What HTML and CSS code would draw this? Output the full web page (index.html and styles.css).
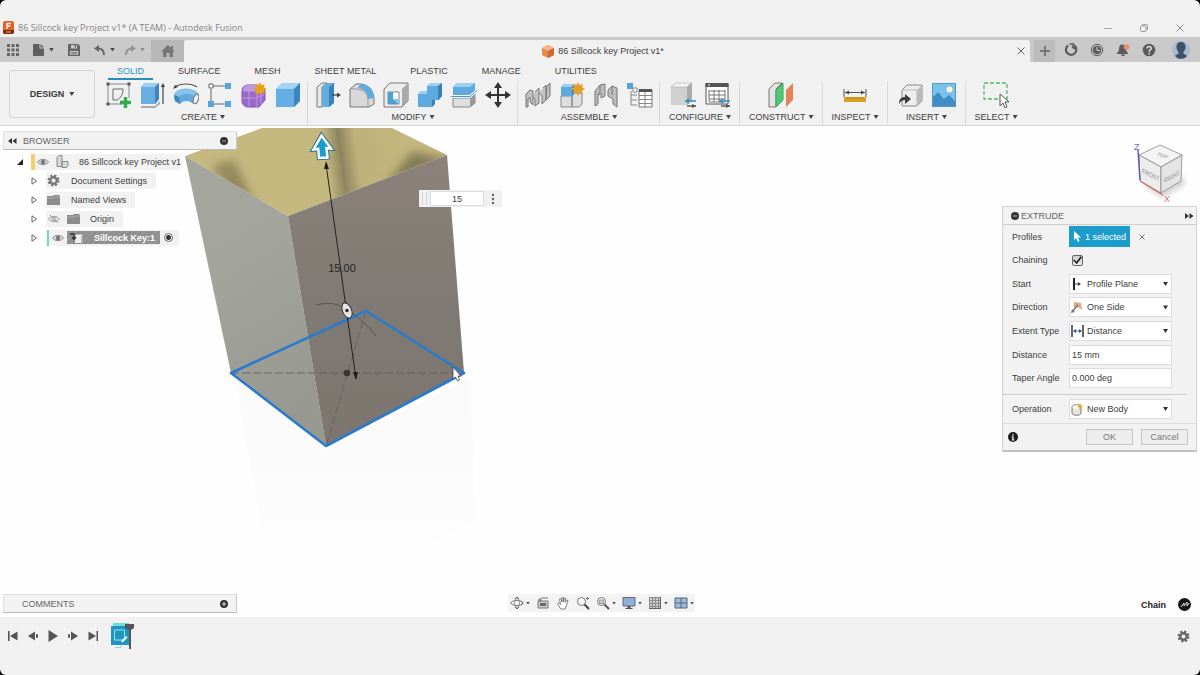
FILE: index.html
```html
<!DOCTYPE html>
<html lang="en">
<head>
<meta charset="utf-8">
<title>86 Sillcock key Project v1* (A TEAM) - Autodesk Fusion</title>
<link rel="stylesheet" href="styles.css">
</head>
<body>
<header class="titlebar">
  <svg class="app-logo" width="12" height="14" viewBox="0 0 12 14"><rect x="0" y="0" width="11" height="13" rx="2" fill="#e8611f"/><path d="M0 9h11v2a2 2 0 0 1-2 2H2a2 2 0 0 1-2-2z" fill="#7e2c10"/><path d="M4 8V2.500h4M4 5h3.200" stroke="#fff" stroke-width="1.400" fill="none"/><path d="M3 11h5" stroke="#e9a98c" stroke-width="1"/></svg>
  <h1 class="app-title">86 Sillcock key Project v1* (A TEAM) - Autodesk Fusion</h1>
  <div class="window-controls">
    <button aria-label="Minimize"><svg width="10" height="10" viewBox="0 0 10 10"><path d="M1 5.500h8" stroke="#aaa"/></svg></button>
    <button aria-label="Restore"><svg width="10" height="10" viewBox="0 0 10 10" fill="none" stroke="#999"><rect x="1.500" y="3" width="5.500" height="5.500" rx="1"/><path d="M3 3V2.500a1 1 0 0 1 1-1h3.500a1 1 0 0 1 1 1V6a1 1 0 0 1-1 1"/></svg></button>
    <button aria-label="Close"><svg width="10" height="10" viewBox="0 0 10 10" stroke="#8c8c8c"><path d="M1.500 1.500l7 7M8.500 1.500l-7 7"/></svg></button>
  </div>
</header>

<nav class="tabbar">
  <div class="quick">
    <button aria-label="Data panel"><svg width="12" height="12" viewBox="0 0 12 12" fill="#666"><path d="M0 0h3v3H0zM4.500 0h3v3h-3zM9 0h3v3H9zM0 4.500h3v3H0zM4.500 4.500h3v3h-3zM9 4.500h3v3H9zM0 9h3v3H0zM4.500 9h3v3h-3zM9 9h3v3H9z"/></svg></button>
    <button class="with-arrow" aria-label="File"><svg width="12" height="12" viewBox="0 0 12 12" fill="#5f5f5f"><path d="M0 0h6.500v4.500H11V12H0z"/><path d="M7.500 0L11 3.500H7.500z"/></svg><i class="caret"></i></button>
    <button aria-label="Save"><svg width="12" height="12" viewBox="0 0 12 12"><path d="M0 0h10l2 2v10H0z" fill="#666"/><path d="M3 1h6v3.500H3zM2 7h8v4H2z" fill="#c9c9c9"/><path d="M6.500 1h1.500v2.500H6.500zM3 8h6v.8H3zM3 9.600h6v.8H3z" fill="#666"/></svg></button>
    <div class="history">
      <button class="with-arrow" aria-label="Undo"><svg width="12" height="12" viewBox="0 0 12 12"><path d="M0 4.500L5 1v7z" fill="#666"/><path d="M4 4.500c4 0 6 1.500 6 6.500" stroke="#666" stroke-width="1.800" fill="none"/></svg><i class="caret"></i></button>
      <button class="with-arrow" aria-label="Redo"><svg width="12" height="12" viewBox="0 0 12 12"><path d="M12 4.500L7 1v7z" fill="#939393"/><path d="M8 4.500c-4 0-6 1.500-6 6.500" stroke="#939393" stroke-width="1.800" fill="none"/></svg><i class="caret caret-dim"></i></button>
    </div>
  </div>
  <button class="home" aria-label="Home"><svg width="14" height="12" viewBox="0 0 14 12" fill="#777"><path d="M7 0l7 6.500h-2V12H8.500V8h-3v4H2V6.500H0z"/><path d="M10 1h2v3h-2z"/></svg></button>
  <div class="doc-tab">
    <svg width="12" height="13" viewBox="0 0 12 13"><path d="M6 0l6 3v7l-6 3-6-3V3z" fill="#e58a4b"/><path d="M6 0l6 3-6 3-6-3z" fill="#f4b587"/><path d="M6 6l6-3v7l-6 3z" fill="#d06a2b"/></svg>
    <span>86 Sillcock key Project v1*</span>
    <button class="doc-close" aria-label="Close tab"><svg width="8" height="8" viewBox="0 0 8 8" stroke="#666"><path d="M.5.5l7 7M7.500.5l-7 7"/></svg></button>
  </div>
  <button class="new-tab" aria-label="New tab"><svg width="10" height="10" viewBox="0 0 10 10" stroke="#777" stroke-width="2"><path d="M5 0v10M0 5h10"/></svg></button>
  <div class="account">
    <button aria-label="Extensions"><svg width="14" height="14" viewBox="0 0 14 14" fill="none"><path d="M4 2.500a5.200 5.200 0 1 0 6.500.2" stroke="#5c5c5c" stroke-width="2.200"/><path d="M5.500 1.500c2-1 3.500-.8 4.500 0L8.500 4 10 5.500 12.500 4" stroke="#5c5c5c" stroke-width="1.600"/></svg></button>
    <button aria-label="Job status"><svg width="14" height="14" viewBox="0 0 14 14" fill="none"><circle cx="7" cy="7" r="5.700" stroke="#5c5c5c"/><circle cx="7" cy="7" r="4.300" fill="#5c5c5c"/><path d="M7 4v3.500h3" stroke="#d5d5d5"/></svg></button>
    <button aria-label="Notifications"><svg width="14" height="14" viewBox="0 0 14 14"><path d="M6 1.500c3 0 4 2 4 4.500 0 3 2 3 2 5H1c0-2 2-2 2-5 0-2.500 1-4.500 3-4.500zM5 11.500h4c0 2-4 2-4 0z" fill="#5c5c5c"/><circle cx="10.500" cy="4" r="2.800" fill="#ea8b64"/></svg></button>
    <button aria-label="Help"><svg width="14" height="14" viewBox="0 0 14 14"><circle cx="7" cy="7" r="6.300" fill="#5c5c5c"/><path d="M5 5.600c0-3 4.200-2.600 4.200-.2 0 1.500-2 1.600-2 3.400M7.200 9.800v1.600" fill="none" stroke="#e0e0e0" stroke-width="1.500"/></svg></button>
    <button class="avatar" aria-label="Account"><svg width="18" height="18" viewBox="0 0 18 18"><circle cx="9" cy="9" r="9" fill="#a9bad0"/><path d="M9 1c3.200 0 4.500 2.300 4.500 5S12.200 10 11.200 11.500c.3 2 2.800 2 3.800 3.500-3 3.800-9 3.800-12 0 1-1.500 3.500-1.500 3.800-3.500C5.800 10 4.500 8.700 4.500 6S5.800 1 9 1z" fill="#3f506b"/></svg></button>
  </div>
</nav>

<section class="ribbon">
  <button class="workspace">DESIGN <i class="caret"></i></button>
  <div class="ribbon-main">
    <div class="ribbon-tabs">
      <button class="active">SOLID</button><button>SURFACE</button><button>MESH</button><button>SHEET METAL</button><button>PLASTIC</button><button>MANAGE</button><button>UTILITIES</button>
    </div>
    <div class="groups">
      <div class="group">
        <div class="icons">
          <button aria-label="Create sketch"><svg width="26" height="26" viewBox="0 0 26 26" fill="none"><path d="M3 2h21M3 2v20M3 22h14M24 2v14" stroke="#888"/><path d="M8 18V7h3M8 18h4c4-2 6-6 6-11h-7" stroke="#666"/><path d="M1.500.5h3v3h-3zM22.500.5h3v3h-3zM1.500 20.500h3v3h-3z" fill="#555"/><path d="M20.500 15v11M15 20.500h11" stroke="#2fae4e" stroke-width="3.400"/></svg></button>
          <button aria-label="Extrude"><svg width="26" height="26" viewBox="0 0 26 26"><path d="M2 24h14l5-5v3l-5 4H2z" fill="#aaa"/><path d="M2 5l4-4h14v16l-4 5H2z" fill="#68aee0"/><path d="M2 5l4-4h14l-4 4z" fill="#9bd0f0"/><path d="M16 5l4-4v16l-4 5z" fill="#3d87bd"/><path d="M24 22V3" stroke="#444" stroke-width="1.200"/><path d="M21.800 5L24 1l2 4z" fill="#444"/></svg></button>
          <button aria-label="Revolve"><svg width="26" height="26" viewBox="0 0 26 26"><path d="M1 13C4 5 20 5 26 12l-6 10c-3-4-10-4-13 0l-5-3z" fill="#62aadd"/><path d="M1 13C4 5 20 5 26 12l-5 2c-4-3-11-3-15 1z" fill="#86c3ea"/><path d="M1 13l5 2 1 7-5-3z" fill="#3d87bd"/><ellipse cx="23" cy="17" rx="2.500" ry="4.800" transform="rotate(18 23 17)" fill="#ededed" stroke="#777"/><path d="M2 5c6-4 16-4 22 0" fill="none" stroke="#555" stroke-width="1.200"/><path d="M0 7l2-4 3 2z" fill="#444"/></svg></button>
          <button aria-label="Pattern"><svg width="26" height="26" viewBox="0 0 26 26"><path d="M5 4h13M4 7v12M5 22h13" stroke="#666"/><path d="M2 2h4v4H2z" fill="#fff" stroke="#666"/><path d="M18 1h6v6h-6zM1 19h6v6H1zM18 19h6v6h-6z" fill="#5aa5d8"/></svg></button>
          <button aria-label="Create form"><svg width="26" height="26" viewBox="0 0 26 26"><path d="M7 3h10l7 6v9l-6 7H7c-4 0-6-3-6-7v-8c0-4 2-7 6-7z" fill="#9a6acb" stroke="#8050b5"/><path d="M7 3h10l-3 6H2c0-3 2-6 5-6z" fill="#bd98e0"/><path d="M1 16h14l8-3M8 9v16M16 9v16M2 9h14l6-1M20 6v17" stroke="#c5a2e6" stroke-width=".8" fill="none"/><path d="M19 0l1.500 3.200L24 2l-1.200 3.300L26 7l-3.200 1.500L24 12l-3.500-1.200L19 14l-1.500-3.200L14 12l1.200-3.500L12 7l3.200-1.700L14 2l3.400 1.200z" fill="#e8a21e"/></svg></button>
          <button aria-label="Box"><svg width="26" height="26" viewBox="0 0 26 26"><path d="M1 7l6-6h18v18l-6 6H1z" fill="#63aee2"/><path d="M1 7l6-6h18l-6 6z" fill="#a2d4f3"/><path d="M19 7l6-6v18l-6 6z" fill="#3c86bd"/></svg></button>
        </div>
        <button class="group-label">CREATE <i class="caret"></i></button>
      </div>
      <div class="group">
        <div class="icons">
          <button aria-label="Press pull"><svg width="26" height="26" viewBox="0 0 26 26"><path d="M2 5l5-4h5L7 5v20H2z" fill="#e8e8e8" stroke="#777"/><path d="M7 5l5-4h8l-5 4v20H7z" fill="#62aee0"/><path d="M14 5l5-4v20l-5 4z" fill="#3782b8"/><path d="M17 13h6" stroke="#444" stroke-width="1.300"/><path d="M22 10.500l4 2.500-4 2.500z" fill="#444"/></svg></button>
          <button aria-label="Fillet"><svg width="26" height="26" viewBox="0 0 26 26"><path d="M1 7l6-5c10-1 17 4 18 14v6l-5 3H1z" fill="#d8d8d8" stroke="#777"/><path d="M11 2c8 0 14 5 14 14l-6 1c0-6-4-10-10-11z" fill="#5eaade"/><path d="M1 7c12-1 18 3 18 11v7" fill="none" stroke="#999"/></svg></button>
          <button aria-label="Shell"><svg width="26" height="26" viewBox="0 0 26 26"><path d="M1 7l6-6h18v18l-6 6H1z" fill="#ededed" stroke="#777"/><path d="M19 7l6-6v18l-6 6z" fill="#a9a9a9"/><path d="M5 10h11v12H5z" fill="#fff" stroke="#888"/><path d="M5 10h5v7l6 5H5z" fill="#4e9fd6"/><path d="M10 17h6v5z" fill="#86c4ec"/></svg></button>
          <button aria-label="Combine"><svg width="26" height="26" viewBox="0 0 26 26"><path d="M1 12l3-3h6V4l4-3h11v13l-3 4h-4v4l-3 3H1z" fill="#5eaade"/><path d="M10 4l4-3h11l-4 3zM1 12l3-3h6v3z" fill="#9bd0f0"/><path d="M21 4l4-3v13l-4 4zM15 18h3v4l-3 3z" fill="#3681b8"/></svg></button>
          <button aria-label="Split body"><svg width="26" height="26" viewBox="0 0 26 26"><path d="M2 5l4-4h18v8l-5 4H2z" fill="#5eaade"/><path d="M2 5l4-4h18l-5 4z" fill="#9bd0f0"/><path d="M2 16h17l5-4v9l-5 4H2z" fill="#dedede" stroke="#888"/><path d="M19 16l5-4v9l-5 4z" fill="#999"/><path d="M0 14.500h19l7-6" stroke="#fff" stroke-width="2.500" fill="none"/><path d="M0 14.500h19l7-6" stroke="#4397ce" fill="none"/></svg></button>
          <button aria-label="Move"><svg width="26" height="26" viewBox="0 0 26 26"><path d="M13 4v18M4 13h18" stroke="#333" stroke-width="2"/><path d="M13 0l4 6H9zM13 26l4-6H9zM0 13l6-4v8zM26 13l-6-4v8z" fill="#333"/></svg></button>
        </div>
        <button class="group-label">MODIFY <i class="caret"></i></button>
      </div>
      <div class="group">
        <div class="icons">
          <button aria-label="Joint"><svg width="26" height="26" viewBox="0 0 26 26" fill="#c2c2c2" stroke="#777"><path d="M1 12l4-4 3 1v14l-3-3v-5l-2 2v8H1zM10 10l4-4v15l-4 3v-7l-2-2M18 6l3-3v15l-4 4v-8l-3-3M22 4l3-3v13l-4 4z"/></svg></button>
          <button aria-label="New component"><svg width="26" height="26" viewBox="0 0 26 26"><path d="M2 14h11v11H2zM13 14l3-3h7v11l-3 3h-7z" fill="#dedede" stroke="#888"/><path d="M2 5l3-3h11v9l-3 3H2z" fill="#5eaade"/><path d="M2 5l3-3h11l-3 3z" fill="#9bd0f0"/><path d="M13 5l3-3v9l-3 3z" fill="#3782b8"/><path d="M19 0l1.500 3L24 2l-1 3 3 2-3 1.500 1 3.500-3.500-1-1.500 3-1.500-3L14 12l1-3.500L12 7l3-2-1-3 3.500 1z" fill="#e4a12a"/></svg></button>
          <button aria-label="As-built joint"><svg width="26" height="26" viewBox="0 0 26 26" fill="#bdbdbd" stroke="#777"><path d="M2 9l5-6 5-1v12l-4 2v-5l-3 3v8l-3 2zM15 8l4-4 5 2v19l-4-3v-5l-5-3z"/><path d="M7 3v7l-3 3M19 4v9" fill="none"/></svg></button>
          <button aria-label="Bill of materials"><svg width="26" height="26" viewBox="0 0 26 26"><path d="M0 1h6v6H0z" fill="#56a4da"/><path d="M6 6h4v4H6z" fill="#fff" stroke="#888"/><path d="M4 9v14h6M4 13h6M4 18h6" fill="none" stroke="#888"/><path d="M12 8h13v17H12z" fill="#fff" stroke="#777"/><path d="M12 7h13v3H12z" fill="#555"/><path d="M12 13.500h13M12 17.500h13M12 21.500h13M18 10v15" stroke="#888"/></svg></button>
        </div>
        <button class="group-label">ASSEMBLE <i class="caret"></i></button>
      </div>
      <div class="group group-wide">
        <div class="icons">
          <button aria-label="Configure"><svg width="26" height="26" viewBox="0 0 26 26"><path d="M1 5l5-4h16v17l-5 5H1z" fill="#d0d0d0"/><path d="M1 5l5-4h16l-5 4z" fill="#f3f3f3" stroke="#aaa" stroke-width=".6"/><path d="M17 5l5-4v17l-5 5z" fill="#aaa"/><path d="M15 19h11" stroke="#3e91bd" stroke-width="1.600"/><path d="M17 24h9" stroke="#555" stroke-width="1.400"/><path d="M15 19l4-3v6z" fill="#3e91bd"/><path d="M26 24l-4-2v4z" fill="#555"/></svg></button>
          <button aria-label="Configuration table"><svg width="26" height="26" viewBox="0 0 26 26"><path d="M2 2h22v20H2z" fill="#fff" stroke="#555"/><path d="M1.500 1h23v4h-23z" fill="#555"/><path d="M5 9h16M5 13h16M5 17h16M5 20h16M5 8v12M10 8v12M15 8v12M21 8v12" stroke="#777"/><path d="M4 3h2" stroke="#fff"/><path d="M15 19h11" stroke="#3e91bd" stroke-width="1.600"/><path d="M17 24h9" stroke="#555" stroke-width="1.400"/><path d="M15 19l4-3v6z" fill="#3e91bd"/><path d="M26 24l-4-2v4z" fill="#555"/></svg></button>
        </div>
        <button class="group-label">CONFIGURE <i class="caret"></i></button>
      </div>
      <div class="group group-wide">
        <div class="icons">
          <button aria-label="Offset plane"><svg width="26" height="26" viewBox="0 0 26 26"><path d="M1 7l6-6h7L8 7v18H1z" fill="#e3e3e3" stroke="#777"/><path d="M8 8l7-7v17l-7 7z" fill="#50c873" stroke="#38a95b"/><path d="M18 8l7-7v17l-7 7z" fill="#e18555"/></svg></button>
        </div>
        <button class="group-label">CONSTRUCT <i class="caret"></i></button>
      </div>
      <div class="group group-wide">
        <div class="icons">
          <button aria-label="Measure"><svg width="26" height="26" viewBox="0 0 26 26"><path d="M2 7v8M24 7v8M3 10.500h20" stroke="#555"/><path d="M3 10.500l4-2v4zM23 10.500l-4-2v4z" fill="#444"/><path d="M2 15h22v5H2z" fill="#dda126"/><path d="M5 15v2.500M8 15v2M11 15v2.500M14 15v2M17 15v2.500M20 15v2" stroke="#b07c18"/></svg></button>
        </div>
        <button class="group-label">INSPECT <i class="caret"></i></button>
      </div>
      <div class="group group-wide">
        <div class="icons">
          <button aria-label="Insert derive"><svg width="26" height="26" viewBox="0 0 26 26"><path d="M5 8l5-5h15v16l-5 5H5z" fill="#ededed" stroke="#888"/><path d="M20 8l5-5v16l-5 5z" fill="#bbb"/><path d="M5 8h15v16" fill="none" stroke="#bbb"/><path d="M2 22c0-5 2-7 6-7v-3l6 5-6 5v-4c-3 0-4 1-6 4z" fill="#3c3c3c"/></svg></button>
          <button aria-label="Insert image"><svg width="26" height="26" viewBox="0 0 26 26"><path d="M1 1h24v24H1z" fill="#79c2ec"/><path d="M1 16l6-6 6 7 5-4 7 7v5H1z" fill="#3f8dc4"/><circle cx="18.500" cy="7.500" r="3" fill="#fff6d6"/><path d="M1.500 1.500h23v23h-23z" fill="none" stroke="#5098c9"/></svg></button>
        </div>
        <button class="group-label">INSERT <i class="caret"></i></button>
      </div>
      <div class="group group-wide group-last">
        <div class="icons">
          <button aria-label="Select"><svg width="28" height="26" viewBox="0 0 28 26"><path d="M2 1h23v16H2z" fill="none" stroke="#56b866" stroke-width="1.300" stroke-dasharray="4 2"/><path d="M18 12v12l3-3 2 5 2-1-2-5h4z" fill="#fff" stroke="#555"/></svg></button>
        </div>
        <button class="group-label">SELECT <i class="caret"></i></button>
      </div>
    </div>
  </div>
</section>

<main class="canvas">
  <svg class="scene" width="600" height="491" viewBox="0 126 600 491">
    <defs>
      <linearGradient id="leftFace" x1="0" y1="0" x2="0.300" y2="1"><stop offset="0" stop-color="#a5a59d"/><stop offset=".45" stop-color="#a3a59d"/><stop offset="1" stop-color="#97988f"/></linearGradient>
      <linearGradient id="rightFace" x1="0" y1="0" x2="0" y2="1"><stop offset="0" stop-color="#8b827a"/><stop offset=".5" stop-color="#7f7a73"/><stop offset="1" stop-color="#7c766f"/></linearGradient>
      <linearGradient id="inside" gradientUnits="userSpaceOnUse" x1="185" y1="185" x2="447" y2="150"><stop offset="0" stop-color="#c6b97f"/><stop offset=".54" stop-color="#c5b87f"/><stop offset=".6" stop-color="#8e845f"/><stop offset=".66" stop-color="#beb179"/><stop offset="1" stop-color="#c8bb82"/></linearGradient>
      <linearGradient id="reflection" x1="0" y1="0" x2="0" y2="1"><stop offset="0" stop-color="#fafafa"/><stop offset="1" stop-color="#fefefe"/></linearGradient>
      <filter id="soft" x="-50%" y="-50%" width="200%" height="200%"><feGaussianBlur stdDeviation="5"/></filter>
      <clipPath id="mouth"><path d="M185 156L262 128H392L447 155L288 216z"/></clipPath>
    </defs>
    <path d="M236 380L326 450L470 378L476 520L330 590L262 530z" fill="url(#reflection)"/>
    <path d="M185 156L262 128H392L447 155L288 216z" fill="url(#inside)"/>
    <g clip-path="url(#mouth)"><path d="M212 166L234 160L256 206L235 200z" fill="#827852" filter="url(#soft)" opacity=".75"/><path d="M385 186L412 152L450 158z" fill="#6e6649" filter="url(#soft)" opacity=".75"/></g>
    <path d="M185 156L288 216L326 446L231 373z" fill="url(#leftFace)"/>
    <path d="M288 216L447 155L464 373L326 446z" fill="url(#rightFace)"/>
    <path d="M231 373H464M366 311L326 446" stroke="#5f5b56" stroke-dasharray="8 3" fill="none" opacity=".8"/>
    <path d="M231 373L366 311L464 373L326 446z" fill="none" stroke="#2a7bd0" stroke-width="2.600" stroke-linejoin="round"/>
    <circle cx="347" cy="373" r="3.300" fill="#393735"/>
    <path d="M316 305C330 301 341 305 347 310C359 317 370 328 376 336" fill="none" stroke="#55514d" stroke-width=".9"/>
    <path d="M326 164L356 379" stroke="#222"/>
    <path d="M326 161l3 8h-5zM356 380l-3-8h5z" fill="#1b1b1b"/>
    <ellipse cx="347" cy="310.500" rx="4.500" ry="8" transform="rotate(-22 347 310.500)" fill="#e4e4e2" stroke="#333"/>
    <circle cx="347" cy="310.500" r="1.700" fill="#222"/>
    <text class="dimension" x="342" y="272" text-anchor="middle">15.00</text>
    <path d="M321.500 135.500L331 148.500L326.500 148.200L327.500 157.500L319 158L318.200 149L313.500 149.500z" fill="#1c9bce" stroke="#287491" stroke-width="4.500"/>
    <path d="M321.500 135.500L331 148.500L326.500 148.200L327.500 157.500L319 158L318.200 149L313.500 149.500z" fill="#1c9bce" stroke="#fff" stroke-width="2.500"/>
    <path d="M453 367v12l2.500-2 2 4 2-1-1.500-4h3z" fill="#fff" stroke="#444" stroke-width=".8"/>
  </svg>

  <section class="browser">
    <div class="panel-bar">
      <svg width="9" height="6" viewBox="0 0 9 6" fill="#333"><path d="M4 0v6L0 3zM8.500 0v6l-4-3z"/></svg>
      <h2>BROWSER</h2>
      <button aria-label="Collapse browser"><svg width="8" height="8" viewBox="0 0 8 8"><circle cx="4" cy="4" r="4" fill="#333"/><path d="M2 4h4" stroke="#aaa"/></svg></button>
    </div>
    <ul class="tree">
      <li class="root">
        <button class="twist" aria-label="Collapse"><svg width="8" height="8" viewBox="0 0 8 8"><path d="M7 1v6H1z" fill="#222"/></svg></button>
        <div class="node"><i class="stripe yellow"></i><svg width="12" height="10" viewBox="0 0 12 10"><path d="M.5 5C3 1.500 9 1.500 11.500 5 9 8.500 3 8.500.5 5z" fill="#ddd" stroke="#888"/><circle cx="6" cy="5" r="2.200" fill="#777"/></svg><svg width="13" height="13" viewBox="0 0 13 13" fill="#d8d8d8" stroke="#888"><path d="M1 2.500l2-2h3v11H1zM6 6.500h6v4l-1.500 2H6z"/></svg><span>86 Sillcock key Project v1</span></div>
      </li>
      <li>
        <button class="twist" aria-label="Expand"><svg width="7" height="8" viewBox="0 0 7 8"><path d="M1 .8v6.400L5.500 4z" fill="#fff" stroke="#666"/></svg></button>
        <div class="node plain"><svg width="13" height="13" viewBox="0 0 14 14"><circle cx="7" cy="7" r="5" fill="none" stroke="#777" stroke-width="3" stroke-dasharray="2.200 1.730"/><circle cx="7" cy="7" r="3.500" fill="none" stroke="#777" stroke-width="2.500"/></svg><span>Document Settings</span></div>
      </li>
      <li>
        <button class="twist" aria-label="Expand"><svg width="7" height="8" viewBox="0 0 7 8"><path d="M1 .8v6.400L5.500 4z" fill="#fff" stroke="#666"/></svg></button>
        <div class="node plain"><svg width="13" height="10" viewBox="0 0 13 10"><path d="M0 1h6l1-1h5l1 1v9H0z" fill="#8c8c8c"/><path d="M0 3h7l1-1h5" stroke="#bbb" stroke-width=".7" fill="none"/></svg><span>Named Views</span></div>
      </li>
      <li>
        <button class="twist" aria-label="Expand"><svg width="7" height="8" viewBox="0 0 7 8"><path d="M1 .8v6.400L5.500 4z" fill="#fff" stroke="#666"/></svg></button>
        <div class="node origin"><svg width="12" height="10" viewBox="0 0 12 10" fill="none" stroke="#999"><path d="M.5 5C3 1.500 9 1.500 11.500 5 9 8.500 3 8.500.5 5zM2 1l8 8"/><circle cx="6" cy="5" r="2"/></svg><svg width="13" height="10" viewBox="0 0 13 10"><path d="M0 1h6l1-1h5l1 1v9H0z" fill="#8c8c8c"/><path d="M0 3h7l1-1h5" stroke="#bbb" stroke-width=".7" fill="none"/></svg><span>Origin</span></div>
      </li>
      <li>
        <button class="twist" aria-label="Expand"><svg width="7" height="8" viewBox="0 0 7 8"><path d="M1 .8v6.400L5.500 4z" fill="#fff" stroke="#666"/></svg></button>
        <div class="node component"><i class="stripe teal"></i><svg width="12" height="10" viewBox="0 0 12 10"><path d="M.5 5C3 1.500 9 1.500 11.500 5 9 8.500 3 8.500.5 5z" fill="#ddd" stroke="#888"/><circle cx="6" cy="5" r="2.200" fill="#777"/></svg><div class="chosen"><svg width="14" height="12" viewBox="0 0 14 12"><path d="M4.500 4l2-2H13v7.500l-2 2H4.500z" fill="#f0f0f0" stroke="#777" stroke-width=".7"/><path d="M11 4l2-2v7.500l-2 2z" fill="#b5b5b5"/><path d="M0 2h4v5M2 5l2 2.500L6 5" fill="none" stroke="#333" stroke-width="1.300"/></svg><span>Sillcock Key:1</span></div><input type="radio" checked aria-label="Activate Sillcock Key:1"></div>
      </li>
    </ul>
  </section>

  <div class="value-box">
    <i class="grip"></i>
    <input type="text" value="15" aria-label="Distance value">
    <button aria-label="More"><svg width="4" height="12" viewBox="0 0 4 12" fill="#666"><circle cx="2" cy="2" r="1.200"/><circle cx="2" cy="6" r="1.200"/><circle cx="2" cy="10" r="1.200"/></svg></button>
  </div>

  <svg class="viewcube" width="70" height="70" viewBox="1130 138 70 70">
    <defs><filter id="cubeShadow" x="-20%" y="-20%" width="140%" height="140%"><feGaussianBlur stdDeviation="2.500"/></filter></defs>
    <path d="M1142 184l20 14 24-14-6-10z" fill="#d4d4d4" filter="url(#cubeShadow)"/>
    <path d="M1139 155l21-10 22 10-21 12z" fill="#f4f4f4" stroke="#888" stroke-width=".8"/>
    <path d="M1139 155l22 12v26l-21-12z" fill="#ececec" stroke="#888" stroke-width=".8"/>
    <path d="M1161 167l21-12-1 26-20 12z" fill="#e4e4e4" stroke="#888" stroke-width=".8"/>
    <path d="M1138 150l2 30" stroke="#5353c4" stroke-width="1.400"/><path d="M1140 181l23 14" stroke="#cf6c6c" stroke-width="1.200"/>
    <text class="face" transform="matrix(1 .5 0 1.400 1142 173)">FRONT</text>
    <text class="face" transform="matrix(1 -.5 0 1.400 1164 183)">RIGHT</text>
    <text class="face" transform="matrix(1 .4 -.8 .8 1156 155)">TOP</text>
    <text class="axis axis-z" x="1134" y="150">Z</text><text class="axis axis-x" x="1164" y="202">X</text>
  </svg>

  <form class="extrude">
    <div class="dialog-head">
      <svg width="8" height="8" viewBox="0 0 8 8"><circle cx="4" cy="4" r="4" fill="#333"/><path d="M2 4h4" stroke="#bbb"/></svg>
      <h2>EXTRUDE</h2>
      <svg width="9" height="6" viewBox="0 0 9 6" fill="#333"><path d="M0 0v6l4-3zM4.500 0v6l4-3z"/></svg>
    </div>
    <div class="fields">
      <div class="field"><span class="name">Profiles</span><button type="button" class="selected"><svg width="8" height="11" viewBox="0 0 8 11"><path d="M1 0v9l2-2 2 4 1.500-1L5 6.500h3z" fill="#fff"/></svg>1 selected</button><button type="button" class="clear" aria-label="Clear selection"><svg width="6" height="6" viewBox="0 0 6 6" stroke="#777"><path d="M.5.5l5 5M5.500.5l-5 5"/></svg></button></div>
      <div class="field"><label for="chain">Chaining</label><input id="chain" type="checkbox" checked></div>
      <div class="field"><label for="start">Start</label><div class="picker"><svg width="12" height="12" viewBox="0 0 12 12"><path d="M3 0v12" stroke="#223" stroke-width="2"/><path d="M4 6h5" stroke="#444"/><path d="M7 4l3 2-3 2z" fill="#444"/></svg><select id="start"><option>Profile Plane</option></select></div></div>
      <div class="field"><label for="direction">Direction</label><div class="picker"><svg width="12" height="12" viewBox="0 0 12 12"><path d="M3 1l7 1 1 7-4-3-4 1z" fill="#e5a77d"/><path d="M1 11l6-7" stroke="#777" stroke-width="1.300"/><path d="M0 12l1-4 3 3z" fill="#777"/></svg><select id="direction"><option>One Side</option></select></div></div>
      <div class="field"><label for="extent">Extent Type</label><div class="picker"><svg width="14" height="12" viewBox="0 0 14 12"><path d="M1 0v12M12 0v12" stroke="#334" stroke-width="1.500"/><path d="M3 6h7" stroke="#578"/><path d="M2 6l3-2v4zM11 6L8 4v4z" fill="#357"/></svg><select id="extent"><option>Distance</option></select></div></div>
      <div class="field"><label for="distance">Distance</label><input id="distance" type="text" value="15 mm"></div>
      <div class="field"><label for="taper">Taper Angle</label><input id="taper" type="text" value="0.000 deg"></div>
    </div>
    <div class="operation field"><label for="operation">Operation</label><div class="picker"><svg width="12" height="13" viewBox="0 0 12 13"><path d="M1 4c0-3 9-3 9 0v6c0 3-9 3-9 0z" fill="#e5e5e5" stroke="#777"/><ellipse cx="5.500" cy="4" rx="4" ry="1.700" fill="#fff"/><path d="M9 0l1 2 2 1.500-2 1L9 7 8 4.500l-2-1L8 2z" fill="#e6ad34"/></svg><select id="operation"><option>New Body</option></select></div></div>
    <div class="dialog-foot">
      <svg width="10" height="10" viewBox="0 0 10 10"><circle cx="5" cy="5" r="5" fill="#1b1b1b"/><path d="M5 2v1.600M5 4.500V8M3.800 4.800H5M3.700 8h2.600" stroke="#fff" stroke-width="1.200"/></svg>
      <button type="button">OK</button><button type="button">Cancel</button>
    </div>
  </form>

  <div class="comments panel-bar"><h2>COMMENTS</h2><button aria-label="Expand comments"><svg width="8" height="8" viewBox="0 0 8 8"><circle cx="4" cy="4" r="4" fill="#333"/><path d="M2 4h4M4 2v4" stroke="#ddd"/></svg></button></div>

  <div class="navbar">
    <button aria-label="Orbit"><svg width="14" height="14" viewBox="0 0 14 14" fill="none" stroke="#777"><ellipse cx="7" cy="7" rx="6" ry="2.500"/><path d="M4.500 9c0 3 5 3 5 0V5c0-3-5-3-5 0z" stroke="#999"/><path d="M5 3l2-2 2 2M5 11l2 2 2-2M11 5l2 2-2 2" stroke="#666"/></svg><i class="caret"></i></button>
    <button aria-label="Look at"><svg width="14" height="14" viewBox="0 0 14 14"><path d="M2 5h10v7H2z" fill="#ccc" stroke="#777"/><path d="M4 7h6v3H4z" fill="#666"/><path d="M3 3h2v2H3zM5 2h7" stroke="#777" fill="none"/></svg></button>
    <button aria-label="Pan"><svg width="14" height="14" viewBox="0 0 14 14"><path d="M4 12L1.500 7.500l1-.8L4.500 8.500 3.500 3l1.200-.4L6 6V1.500h1.300V6L8.500 2l1.200.3L9 6.500l2-2.500 1 .6-1.500 5L9 13H5z" fill="#fff" stroke="#666" stroke-width=".8"/></svg></button>
    <button aria-label="Zoom"><svg width="14" height="14" viewBox="0 0 14 14"><circle cx="5.500" cy="5.500" r="4" fill="#f8f8f8" stroke="#777"/><path d="M8.500 8.500L13 13" stroke="#444" stroke-width="2"/><path d="M11.500 1v3M10 2.500h3" stroke="#777"/></svg></button>
    <button aria-label="Fit"><svg width="14" height="14" viewBox="0 0 14 14"><circle cx="5.500" cy="5.500" r="4" fill="#f8f8f8" stroke="#777"/><path d="M3.500 4h4v3.500h-4z" fill="#ccc" stroke="#999"/><path d="M8.500 8.500L13 13" stroke="#555" stroke-width="2"/></svg><i class="caret"></i></button>
    <button aria-label="Display settings"><svg width="14" height="14" viewBox="0 0 14 14"><path d="M1 1.500h12v8.500H1z" fill="#8fb0d6" stroke="#667"/><path d="M5.500 10h3v2h2v1h-7v-1h2z" fill="#555"/></svg><i class="caret"></i></button>
    <button aria-label="Grid"><svg width="14" height="14" viewBox="0 0 14 14"><path d="M1 1h12v12H1z" fill="#ccc"/><path d="M1 1.500h12M1 4.500h12M1 7.500h12M1 10.500h12M1.500 1v12M4.500 1v12M7.500 1v12M10.500 1v12" stroke="#8c8c8c"/><path d="M1 12.500h12M12.500 1v12" stroke="#666"/></svg><i class="caret"></i></button>
    <button aria-label="Viewports"><svg width="14" height="14" viewBox="0 0 14 14"><path d="M1 2h12v10H1z" fill="#9bb9dd" stroke="#567"/><path d="M7 2v10M1 7h12" stroke="#567"/></svg><i class="caret"></i></button>
  </div>

  <div class="status"><span>Chain</span><svg width="13" height="13" viewBox="0 0 13 13"><circle cx="6.500" cy="6.500" r="6.500" fill="#171717"/><path d="M3 9l3-4v3l3-4v4l2-3" stroke="#ddd" fill="none" stroke-width="1"/></svg></div>
</main>

<footer class="timeline">
  <div class="playback">
    <button aria-label="First"><svg width="12" height="12" viewBox="0 0 12 12" fill="#555"><path d="M1 1h1.600v10H1zM10.500 1.500v9L3 6z"/></svg></button>
    <button aria-label="Step back"><svg width="12" height="12" viewBox="0 0 12 12" fill="#555"><path d="M8 1.500v9L1 6zM9 4l2 .5v3L9 8z"/></svg></button>
    <button aria-label="Play"><svg width="12" height="12" viewBox="0 0 12 12" fill="#555"><path d="M1.500 0v12l9.500-6z"/></svg></button>
    <button aria-label="Step forward"><svg width="12" height="12" viewBox="0 0 12 12" fill="#555"><path d="M4 1.500v9L11 6zM1 4.500L3 4v4l-2-.5z"/></svg></button>
    <button aria-label="Last"><svg width="12" height="12" viewBox="0 0 12 12" fill="#555"><path d="M1.500 1.500v9L9 6zM9.500 1H11v10H9.500z"/></svg></button>
  </div>
  <button class="feature" aria-label="Sketch"><svg width="25" height="28" viewBox="0 0 25 28"><path d="M3 0h16v6H3z" fill="#6fdcdc"/><path d="M1 3h18v19H1z" fill="#1c97c4"/><path d="M4.500 7h10M4.500 7v10M4.500 17h8M14.500 7v7" stroke="#a7dcef" fill="none"/><path d="M11 18l5-5 1.500 1.500-5 5z" fill="#fff"/><path d="M5 24.500h6v-2" fill="none" stroke="#a9cbd5"/><path d="M15 1h9v4l-3 2v19h-2V7l-4-2z" fill="#555"/></svg></button>
  <button class="settings" aria-label="Timeline settings"><svg width="13" height="13" viewBox="0 0 14 14"><circle cx="7" cy="7" r="5" fill="none" stroke="#666" stroke-width="3" stroke-dasharray="2.200 1.730"/><circle cx="7" cy="7" r="3.500" fill="none" stroke="#666" stroke-width="2.500"/></svg></button>
</footer>
</body>
</html>
```
FILE: styles.css
```css
* { box-sizing: border-box; }
html { background: #000; }
body { margin: 0; min-height: 100vh; display: flex; flex-direction: column; overflow: hidden; border-radius: 6px; background: #f1f1f1; color: #3c3c3c; font: 9px/12px "Liberation Sans", Arial, sans-serif; }
button, input, select { font: inherit; color: inherit; }
button { display: inline-flex; align-items: center; justify-content: center; margin: 0; padding: 0; border: 0; background: none; white-space: nowrap; }
h1, h2 { margin: 0; font: inherit; }
svg { display: block; flex: none; }
.caret { width: 5px; height: 4px; flex: none; background: #444; clip-path: polygon(0 0, 100% 0, 50% 100%); }
.caret-dim { background: #8d8d8d; }

.titlebar { display: flex; align-items: center; height: 37px; padding: 18px 14px 0 3px; }
.app-title { margin-left: 3px; color: #858585; font: 9px/12px "Open Sans", "Noto Sans", sans-serif; }
.window-controls { display: flex; gap: 26px; margin-left: auto; padding-right: 1px; }

.tabbar { display: flex; align-items: flex-end; height: 25px; background: #c9c9c9; }
.quick { display: flex; align-items: center; gap: 14px; height: 25px; padding: 0 6px 0 7px; }
.history { display: flex; gap: 9px; }
.with-arrow { gap: 4px; }
.home { width: 33px; height: 22px; background: #b8b8b8; }
.doc-tab { position: relative; flex: 1; display: flex; align-items: center; justify-content: center; gap: 4px; height: 22px; padding-right: 8px; background: #f1f1f1; border-radius: 3px 3px 0 0; }
.doc-close { position: absolute; right: 5px; top: 7px; }
.new-tab { width: 21px; height: 22px; margin-left: 4px; background: #bcbcbc; }
.account { display: flex; align-items: center; gap: 12px; height: 25px; padding: 0 10px 0 9px; }
.avatar { margin-left: 4px; }

.ribbon { display: flex; gap: 3px; height: 64px; padding-left: 9px; border-bottom: 1px solid #d5d5d5; }
.workspace { gap: 5px; width: 86px; height: 48px; margin-top: 8px; border: 1px solid #d2d2d2; border-radius: 3px; font-weight: bold; }
.ribbon-tabs { display: flex; gap: 16px; padding-left: 10px; }
.ribbon-tabs button { height: 18px; padding: 1px 9px 0; border-bottom: 2px solid transparent; }
.ribbon-tabs .active { color: #2696c4; border-color: #2a8db8; }
.groups { display: flex; padding-top: 2px; }
.group { display: flex; flex-direction: column; align-items: center; gap: 3px; height: 42px; padding: 0 6px 0 7px; border-right: 1px solid #dadada; }
.group-wide { padding: 0 8px 0 9px; }
.group-last { border: 0; }
.icons { display: flex; gap: 8px; }
.group-label { gap: 3px; }

.canvas { position: relative; flex: 1; background: #fefefe; }
.scene { position: absolute; left: 0; top: 0; }
.dimension { font-size: 11px; fill: #262626; }
.panel-bar { display: flex; align-items: center; width: 234px; height: 19px; padding: 0 8px 0 4px; background: #f2f2f2; border: 1px solid #e0e0e0; border-right-color: #c8c8c8; border-bottom-color: #bbb; color: #666; }
.panel-bar h2 { margin-left: 6px; }
.panel-bar button { margin-left: auto; }
.browser { position: absolute; left: 3px; top: 5px; }
.tree { margin: 2px 0 0; padding: 0; list-style: none; }
.tree li { display: flex; align-items: center; height: 19px; padding-left: 28px; }
.tree .root { padding-left: 13px; }
.twist { width: 7px; }
.node { display: flex; align-items: center; height: 16px; margin-left: 8px; padding-right: 9px; background: #f2f2f2; white-space: nowrap; }
.root .node { gap: 7px; padding-right: 0; }
.root .node svg + svg { margin-right: 3px; }
.root .stripe { margin-right: -5px; }
.stripe { width: 4px; height: 16px; }
.yellow { background: #f3d06a; }
.teal { width: 2px; background: #70d8cc; }
.plain { gap: 11px; padding-left: 1px; }
.origin { gap: 7px; padding-left: 2px; }
.origin span { margin-left: 3px; }
.component { gap: 3px; padding-right: 6px; }
.component .stripe { margin-left: 1px; }
.chosen { display: flex; align-items: center; gap: 10px; height: 13px; padding: 0 5px 0 3px; background: repeating-linear-gradient(135deg, #8d8d8d 0 2px, #979797 2px 4px); color: #fff; font-weight: bold; }
.component input { appearance: none; width: 9px; height: 9px; margin: 0 0 0 1px; border: 1px solid #666; border-radius: 50%; background: radial-gradient(#333 0 2px, #fff 3px); }

.value-box { position: absolute; left: 419px; top: 64px; display: flex; align-items: center; width: 83px; height: 17px; background: #f0f0f0; }
.grip { width: 5px; height: 13px; margin: 0 3px; border: solid #d8d8d8; border-width: 0 1px; }
.value-box input { width: 54px; height: 15px; padding: 0; border: 1px solid #ddd; background: #fff; text-align: center; }
.value-box button { margin-left: 7px; }

.viewcube { position: absolute; right: 0; top: 12px; }
.face { font-size: 5px; fill: #8c8c8c; }
.axis { font-size: 9px; }
.axis-z { fill: #6b6bc4; }
.axis-x { fill: #dc7070; }

.extrude { position: absolute; right: 3px; top: 80px; width: 195px; margin: 0; background: #f2f2f2; border: 1px solid #d4d4d4; border-bottom: 2px solid #c2c2c2; }
.dialog-head { display: flex; align-items: center; gap: 2px; height: 18px; padding: 0 2px 0 8px; border-bottom: 1px solid #cfcfcf; color: #666; }
.dialog-head h2 { flex: 1; }
.fields { display: grid; grid-template-rows: repeat(7, 1fr); height: 165px; }
.field { display: flex; align-items: center; padding-left: 9px; }
.field label, .name { width: 57px; }
.field > input[type="text"] { width: 103px; height: 20px; padding: 0 2px; border: 1px solid #ddd; background: #fff; }
.picker { display: flex; align-items: center; position: relative; width: 103px; }
.picker svg { position: absolute; left: 2px; pointer-events: none; }
.picker::after { content: ""; position: absolute; right: 4px; width: 5px; height: 4px; background: #333; clip-path: polygon(0 0, 100% 0, 50% 100%); pointer-events: none; }
select { appearance: none; width: 100%; height: 20px; padding: 0 14px 0 17px; border: 1px solid #ddd; border-radius: 0; background: #fff; }
.field input[type="checkbox"] { appearance: none; width: 11px; height: 11px; margin: 0 0 0 3px; border: 1px solid #666; border-radius: 2px; background: linear-gradient(#ccc, #eee); display: grid; place-items: center; }
.field input[type="checkbox"]::after { content: ""; width: 9px; height: 8px; background: #222; clip-path: polygon(0 50%, 15% 38%, 38% 68%, 85% 0, 100% 12%, 42% 100%); }
.selected { gap: 4px; width: 61px; height: 21px; background: #1b9ccb; color: #fff; }
.clear { margin-left: 9px; }
.operation { height: 29px; margin-right: 9px; border-top: 1px solid #ccc; margin-top: 4px; }
.dialog-foot { display: flex; align-items: center; gap: 8px; height: 27px; padding: 0 8px 0 5px; border-top: 1px solid #ddd; }
.dialog-foot svg { margin-right: auto; }
.dialog-foot button { width: 47px; height: 16px; border: 1px solid #c5c5c5; background: #ededed; color: #777; }

.comments { position: absolute; left: 3px; bottom: 4px; }
.comments h2 { margin-left: 14px; }
.navbar { position: absolute; left: 508px; bottom: 5px; display: flex; align-items: center; gap: 6px; height: 18px; padding: 0 1px 0 2px; background: #f3f3f3; }
.navbar button { gap: 2px; }
.navbar .caret { width: 4px; height: 3px; }
.status { position: absolute; right: 9px; bottom: 6px; display: flex; align-items: center; gap: 12px; color: #222; font-weight: bold; }

.timeline { display: flex; align-items: flex-start; height: 58px; padding: 6px 10px 0 7px; }
.playback { display: flex; align-items: center; gap: 8px; height: 26px; }
.feature { margin-left: 11px; }
.settings { margin-left: auto; height: 26px; }
```
